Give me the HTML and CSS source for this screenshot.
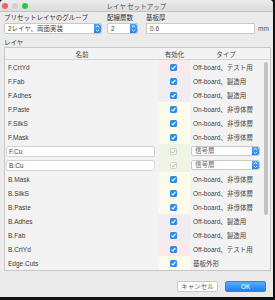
FILE: index.html
```html
<!DOCTYPE html>
<html lang="ja">
	<head>
		<meta charset="utf-8">
		<title>レイヤ セットアップ</title>
		<link rel="stylesheet" href="styles.css">
	</head>
	<body>
		<div class="window">
			<div class="titlebar">
				<div class="lights">
					<span class="light red"></span>
					<span class="light gray"></span>
					<span class="light green"></span>
				</div>
				<div class="title">レイヤ セットアップ</div>
				<div></div>
			</div>
			<div class="content">
				<div class="presets">
					<div class="field group">
						<div class="label">プリセットレイヤのグループ</div>
						<div class="select">
							<span class="value">2レイヤ、両面実装</span>
							<span class="stepper"><svg width="7" height="11" viewBox="0 0 7 11"><path d="M1.8 4.4 3.5 2.8 5.2 4.4M1.8 6.6 3.5 8.2 5.2 6.6" fill="none" stroke="#fff" stroke-width="0.9"/></svg></span>
						</div>
					</div>
					<div class="field count">
						<div class="label">配線層数</div>
						<div class="select">
							<span class="value">2</span>
							<span class="stepper"><svg width="7" height="11" viewBox="0 0 7 11"><path d="M1.8 4.4 3.5 2.8 5.2 4.4M1.8 6.6 3.5 8.2 5.2 6.6" fill="none" stroke="#fff" stroke-width="0.9"/></svg></span>
						</div>
					</div>
					<div class="field thick">
						<div class="label">基板厚</div>
						<div class="unit-row">
							<div class="textbox">0.6</div>
							<span class="unit">mm</span>
						</div>
					</div>
				</div>

				<div class="section-label">レイヤ</div>

				<div class="layers">
					<div class="head">
						<div>名前</div>
						<div>有効化</div>
						<div>タイプ</div>
						<div></div>
					</div>
					<div class="body">
						<div class="rows">
							<div class="row"><div class="name">F.CrtYd</div><div class="enable pink"><span class="check"></span></div><div class="type">Off-board、テスト用</div></div>
							<div class="row"><div class="name">F.Fab</div><div class="enable lilac"><span class="check"></span></div><div class="type">Off-board、製造用</div></div>
							<div class="row"><div class="name">F.Adhes</div><div class="enable lilac"><span class="check"></span></div><div class="type">Off-board、製造用</div></div>
							<div class="row"><div class="name">F.Paste</div><div class="enable cream"><span class="check"></span></div><div class="type">On-board、非導体層</div></div>
							<div class="row"><div class="name">F.SilkS</div><div class="enable cream"><span class="check"></span></div><div class="type">On-board、非導体層</div></div>
							<div class="row"><div class="name">F.Mask</div><div class="enable cream"><span class="check"></span></div><div class="type">On-board、非導体層</div></div>
							<div class="row"><div class="name"><div class="namebox">F.Cu</div></div><div class="enable mint"><span class="check off"></span></div><div class="type"><div class="select small"><span class="value">信号層</span><span class="stepper"><svg width="7" height="10" viewBox="0 0 7 10"><path d="M1.8 4 3.5 2.5 5.2 4M1.8 6 3.5 7.5 5.2 6" fill="none" stroke="#fff" stroke-width="0.9"/></svg></span></div></div></div>
							<div class="row"><div class="name"><div class="namebox">B.Cu</div></div><div class="enable mint"><span class="check off"></span></div><div class="type"><div class="select small"><span class="value">信号層</span><span class="stepper"><svg width="7" height="10" viewBox="0 0 7 10"><path d="M1.8 4 3.5 2.5 5.2 4M1.8 6 3.5 7.5 5.2 6" fill="none" stroke="#fff" stroke-width="0.9"/></svg></span></div></div></div>
							<div class="row"><div class="name">B.Mask</div><div class="enable cream"><span class="check"></span></div><div class="type">On-board、非導体層</div></div>
							<div class="row"><div class="name">B.SilkS</div><div class="enable cream"><span class="check"></span></div><div class="type">On-board、非導体層</div></div>
							<div class="row"><div class="name">B.Paste</div><div class="enable cream"><span class="check"></span></div><div class="type">On-board、非導体層</div></div>
							<div class="row"><div class="name">B.Adhes</div><div class="enable lilac"><span class="check"></span></div><div class="type">Off-board、製造用</div></div>
							<div class="row"><div class="name">B.Fab</div><div class="enable lilac"><span class="check"></span></div><div class="type">Off-board、製造用</div></div>
							<div class="row"><div class="name">B.CrtYd</div><div class="enable pink"><span class="check"></span></div><div class="type">Off-board、テスト用</div></div>
							<div class="row"><div class="name">Edge.Cuts</div><div class="enable cream"><span class="check"></span></div><div class="type">基板外形</div></div>
						</div>
						<div class="scroll"><div class="thumb"></div></div>
					</div>
				</div>

				<div class="footer">
					<button class="btn cancel">キャンセル</button>
					<button class="btn ok">OK</button>
				</div>
			</div>
		</div>
	</body>
</html>
```

FILE: styles.css
```css
body {
	margin: 0;
	background: #121212;
	font-family: "Liberation Sans", "Noto Sans CJK JP", sans-serif;
	font-size: 6.5px;
	color: #3c3c3c;
}

.window {
	width: 273px;
	height: 297px;
	background: #ebebeb;
	border-radius: 4px 4px 0 0;
	overflow: hidden;
	display: flex;
	flex-direction: column;
}

/* title bar */
.titlebar {
	height: 12px;
	display: grid;
	grid-template-columns: 1fr auto 1fr;
	align-items: center;
	background: linear-gradient(#ececec, #dcdcdc);
	border-bottom: 1px solid #c4c4c4;
	box-sizing: border-box;
}
.lights {
	display: flex;
	gap: 4px;
	padding-left: 2px;
}
.light {
	width: 6px;
	height: 6px;
	border-radius: 50%;
}
.light.red { background: #fc5f57; }
.light.gray { background: #d0d0d0; }
.light.green { background: #2ac940; }
.title {
	font-family: "Noto Sans CJK JP", sans-serif;
	font-size: 6.5px;
	color: #4e4e4e;
}

.content {
	flex: 1;
	display: flex;
	flex-direction: column;
	padding: 2px 2px 0 4px;
}

/* preset fields */
.presets {
	display: flex;
	gap: 5px;
}
.label {
	line-height: 8px;
	height: 8px;
	margin-bottom: 1px;
	color: #333;
}
.group { width: 98px; }
.count { width: 31px; margin-right: 3px; }
.thick { flex: 1; }

.select {
	height: 11px;
	display: flex;
	align-items: stretch;
	background: #fff;
	border: 1px solid #c9c9c9;
	border-radius: 2px;
	box-sizing: border-box;
}
.select .value {
	flex: 1;
	padding-left: 3px;
	line-height: 9px;
	color: #444;
}
.stepper {
	width: 7px;
	background: linear-gradient(#4ea3fb, #1f7ef0);
	border-radius: 0 2px 2px 0;
	display: flex;
	align-items: center;
}
.unit-row {
	display: flex;
	align-items: center;
	gap: 3px;
}
.textbox {
	width: 109px;
	height: 11px;
	box-sizing: border-box;
	background: #fff;
	border: 1px solid #c9c9c9;
	padding-left: 3px;
	line-height: 9px;
	color: #444;
}
.unit { color: #555; }

.section-label {
	margin-top: 5px;
	line-height: 8px;
	height: 8px;
	color: #333;
}

/* layers table */
.layers {
	border: 1px solid #c8c8c8;
	background: #f3f3f3;
}
.head {
	height: 12px;
	display: grid;
	grid-template-columns: 154px 31px 72px 8px;
	align-items: center;
	text-align: center;
	border-bottom: 1px solid #d6d6d6;
	box-sizing: border-box;
	color: #444;
}
.body {
	display: flex;
}
.rows {
	width: 257px;
}
.row {
	height: 14px;
	display: grid;
	grid-template-columns: 154px 31px 72px;
	align-items: stretch;
}
.name {
	display: flex;
	align-items: center;
	padding-left: 3px;
	color: #3c3c3c;
}
.namebox {
	width: 149px;
	height: 11px;
	margin-left: -2px;
	box-sizing: border-box;
	background: #fff;
	border: 1px solid #d4d4d4;
	border-radius: 2px;
	padding-left: 2px;
	line-height: 9px;
}
.enable {
	display: flex;
	align-items: center;
	justify-content: center;
	padding-right: 3px;
}
.enable.pink { background: #fde9ea; }
.enable.lilac { background: #f0ecf1; }
.enable.cream { background: #fdfbea; }
.enable.mint { background: #eef5e4; }

.check {
	width: 7px;
	height: 7px;
	border-radius: 1.5px;
	background: #2c8bf2 url("data:image/svg+xml;utf8,<svg xmlns='http://www.w3.org/2000/svg' viewBox='0 0 7 7'><path d='M1.6 3.7 2.9 5 5.4 1.8' fill='none' stroke='white' stroke-width='1.1'/></svg>") center / 7px 7px no-repeat;
}
.check.off {
	background: #fafafa url("data:image/svg+xml;utf8,<svg xmlns='http://www.w3.org/2000/svg' viewBox='0 0 7 7'><path d='M1.6 3.7 2.9 5 5.4 1.8' fill='none' stroke='%23a8a8a8' stroke-width='0.9'/></svg>") center / 7px 7px no-repeat;
	border: 1px solid #cfcfcf;
	box-sizing: border-box;
}

.type {
	display: flex;
	align-items: center;
	padding-left: 3px;
	color: #444;
}
.select.small {
	width: 69px;
	height: 10px;
	margin-left: -2px;
}
.select.small .value {
	line-height: 8px;
	color: #666;
}

.scroll {
	width: 8px;
	padding: 2px 0 0 2px;
	box-sizing: border-box;
}
.thumb {
	width: 4px;
	height: 153px;
	border-radius: 2px;
	background: #c2c2c2;
}

/* footer */
.footer {
	display: flex;
	justify-content: flex-end;
	gap: 7px;
	padding: 10px 5px 0 0;
}
.btn {
	width: 41px;
	height: 11px;
	padding: 0;
	border-radius: 2px;
	font-family: "Noto Sans CJK JP", sans-serif;
	font-size: 6.5px;
	line-height: 9px;
}
.btn.cancel {
	background: #fff;
	border: 1px solid #c8c8c8;
	color: #555;
}
.btn.ok {
	background: linear-gradient(#5aaaf9, #1e80f2);
	border: 1px solid #2c85ec;
	color: #fff;
}
```
